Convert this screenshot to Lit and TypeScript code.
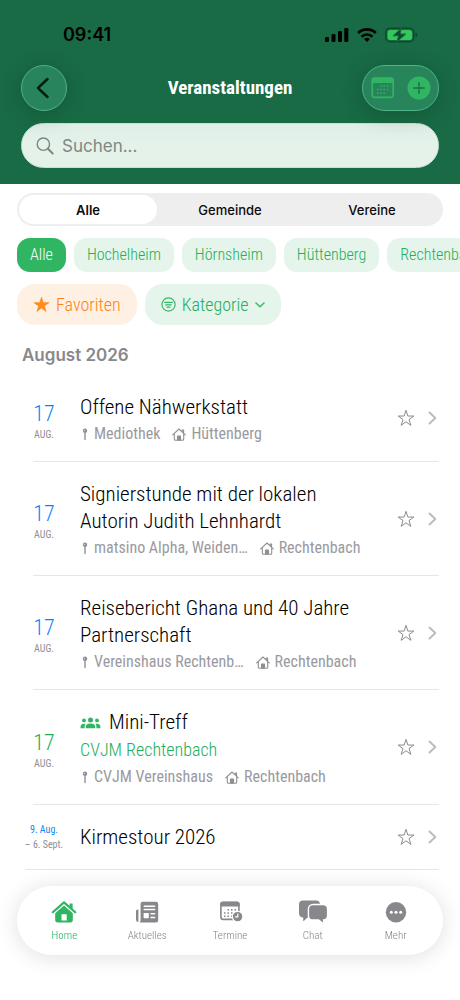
import { LitElement, html, css, svg, nothing } from "lit";
import { customElement, property, state } from "lit/decorators.js";
import { classMap } from "lit/directives/class-map.js";

const star = "M12 1.8l2.5 7.6h8l-6.5 4.7 2.5 7.7-6.5-4.8-6.5 4.8L8 14.1 1.500 9.400h8z";

const icons = {
  signal: svg`<svg width="24" height="16" viewBox="0 0 24 16" fill="#000" aria-hidden="true">
    <rect x="0" y="10" width="4" height="5" rx="1.200"/><rect x="6.500" y="7" width="4" height="8" rx="1.200"/>
    <rect x="13" y="4" width="4" height="11" rx="1.200"/><rect x="19.300" y="1" width="4" height="14" rx="1.200"/></svg>`,
  wifi: svg`<svg width="20" height="16" viewBox="0 0 20 16" fill="none" stroke="#000" stroke-width="2.700" aria-hidden="true">
    <path d="M1.200 6a12.500 12.500 0 0 1 17.600 0"/><path d="M4.600 9.700a7.700 7.700 0 0 1 10.800 0"/>
    <path d="M10 15l-2.900-2.900a4.200 4.200 0 0 1 5.800 0z" fill="#000" stroke="none"/></svg>`,
  battery: svg`<svg width="33" height="16" viewBox="0 0 33 16" aria-hidden="true">
    <rect x=".8" y="1.300" width="28" height="13.400" rx="4.300" fill="none" stroke="#0f4a2e" stroke-width="1.500"/>
    <path d="M30.500 5.500q2 .5 2 2.500t-2 2.500z" fill="#0f4a2e"/>
    <rect x="2.500" y="3" width="24.600" height="10" rx="2.800" fill="#34c759"/>
    <path d="M16.500 1L8 8.800h5.600L11.800 15 20.800 7H15z" fill="#0f4a2e" stroke="#186b45" stroke-width="1"/></svg>`,
  back: svg`<svg width="14" height="22" viewBox="0 0 14 22" fill="none" stroke="#04210f" stroke-width="2.500" stroke-linecap="round" stroke-linejoin="round" aria-hidden="true"><path d="M11.500 2L2 11l9.500 9"/></svg>`,
  calendar: svg`<svg width="24" height="22" viewBox="0 0 24 22" aria-hidden="true">
    <rect x="1.200" y="1.200" width="21" height="19.200" rx="2.600" fill="none" stroke="#30b562" stroke-width="1.700"/>
    <path d="M.8 6V3.200A2.600 2.600 0 0 1 3.400.6h16.600a2.600 2.600 0 0 1 2.600 2.600V6z" fill="#30b562"/>
    <g fill="none" stroke="#30b562" stroke-width="1.500" stroke-dasharray="1.500 1.700">
    <path d="M9.200 9h10M6 12.500h13M6 16h9"/></g></svg>`,
  plus: svg`<svg width="24" height="24" viewBox="0 0 24 24" aria-hidden="true"><circle cx="12" cy="12" r="11.500" fill="#30b562"/><path d="M12 7v10M7 12h10" stroke="#217c4e" stroke-width="1.800" stroke-linecap="round"/></svg>`,
  search: svg`<svg width="18" height="18" viewBox="0 0 19 19" fill="none" stroke="#7a8580" stroke-width="1.500" stroke-linecap="round" aria-hidden="true"><circle cx="7.800" cy="7.600" r="6.500"/><path d="M12.600 12.400l5 5" stroke-width="2"/></svg>`,
  starFill: svg`<svg width="17" height="17" viewBox="0 0 24 24" fill="#ff8c22" stroke="#ff8c22" stroke-width="1" stroke-linejoin="round" aria-hidden="true"><path d=${star}/></svg>`,
  star: svg`<svg width="18" height="18" viewBox="0 0 24 24" fill="none" stroke="#88888c" stroke-width="1.300" stroke-linejoin="round" aria-hidden="true"><path d=${star}/></svg>`,
  filter: svg`<svg width="15" height="15" viewBox="0 0 15 15" fill="none" stroke="#38b869" stroke-width="1.200" stroke-linecap="round" aria-hidden="true"><circle cx="7.500" cy="7.500" r="6.600"/><path d="M3.700 5.400h7.600M4.700 7.800h5.600M6 10.200h3"/></svg>`,
  down: svg`<svg width="10" height="6" viewBox="0 0 10 6" fill="none" stroke="#38b869" stroke-width="1.500" stroke-linecap="round" stroke-linejoin="round" aria-hidden="true"><path d="M1 1l4 3.800L9 1"/></svg>`,
  right: svg`<svg width="9" height="14" viewBox="0 0 9 14" fill="none" stroke="#bcbcc0" stroke-width="2" stroke-linecap="round" stroke-linejoin="round" aria-hidden="true"><path d="M1.500 1.500L7.300 7l-5.800 5.500"/></svg>`,
  pin: svg`<svg width="6" height="13" viewBox="0 0 6 13" aria-hidden="true"><circle cx="3" cy="2.800" r="2.200" fill="#909094"/><path d="M3 5v6.500" stroke="#909094" stroke-width="1.400" stroke-linecap="round"/><circle cx="2.400" cy="2.200" r=".5" fill="#fff"/></svg>`,
  house: svg`<svg width="14" height="13" viewBox="0 0 14 13" fill="none" stroke="#909094" stroke-width="1.100" stroke-linecap="round" stroke-linejoin="round" aria-hidden="true"><path d="M.7 6.800L7 1l6.300 5.800M2.300 5.800v5.200q0 1.300 1.300 1.300h6.800q1.300 0 1.300-1.300V5.800M11.600 5V2h-1.300v1.800"/><path d="M5.500 12V8h3v4z" fill="#909094"/></svg>`,
  group: svg`<svg width="21" height="12" viewBox="0 0 21 12" fill="#30b562" aria-hidden="true"><circle cx="10.500" cy="2.900" r="2.500"/><circle cx="4" cy="3.400" r="1.900"/><circle cx="17" cy="3.400" r="1.900"/><path d="M5.800 11.300V9.600c0-2 2-3.100 4.700-3.100s4.700 1.100 4.700 3.100v1.700zM.6 11.300V9.600C.6 7.800 2 6.700 4 6.700c.6 0 1.100.1 1.600.3-.7.700-1 1.600-1 2.600v1.700zM20.400 11.300V9.600c0-1.800-1.400-2.900-3.400-2.900-.6 0-1.100.1-1.600.3.700.7 1 1.600 1 2.600v1.700z"/></svg>`,
  home: svg`<svg width="26" height="24" viewBox="0 0 26 24" aria-hidden="true"><path d="M1.800 12.300L13 2.400l11.200 9.900" fill="none" stroke="#30b562" stroke-width="2.200" stroke-linecap="round" stroke-linejoin="round"/><path d="M18.600 3.500h3V9l-3-2.600z" fill="#30b562"/><path fill-rule="evenodd" d="M13 5.600l8.800 7.700v6.900a2.400 2.400 0 0 1-2.400 2.400H6.600a2.400 2.400 0 0 1-2.400-2.400v-6.900zM10.500 14.200v6.300h5.200v-6.300z" fill="#30b562"/></svg>`,
  news: svg`<svg width="24" height="24" viewBox="0 0 24 24" aria-hidden="true"><path fill="#88888c" d="M3.400 9.500v12.600Q1 22 1 19.700V11q0-1.500 1.500-1.500z"/><path fill="#88888c" d="M8 1.800h13a2.200 2.200 0 0 1 2.200 2.200v16.200a2.200 2.200 0 0 1-2.200 2.200H4.600q1-.8 1-2.200V4A2.200 2.200 0 0 1 8 1.800z"/><path stroke="#fff" stroke-width="1.500" stroke-linecap="round" d="M9.200 6.300h10.400M9.200 9.600h10.400M16 13.800h3.600M16 17.600h3.600"/><rect x="8.600" y="12.900" width="5.200" height="5.300" rx=".7" fill="#fff"/></svg>`,
  dates: svg`<svg width="26" height="24" viewBox="0 0 26 24" aria-hidden="true"><rect x="3.900" y="2.600" width="18" height="16.800" rx="2.400" fill="none" stroke="#88888c" stroke-width="1.600"/><path d="M3.100 6.500V4.200a2.600 2.600 0 0 1 2.600-2.600h14.400a2.600 2.600 0 0 1 2.600 2.600v2.300z" fill="#88888c"/><path d="M10.500 9.700h9M7 13h11M7 16.300h8" stroke="#88888c" stroke-width="1.500" stroke-dasharray="1.500 2"/><circle cx="20.600" cy="16.600" r="5.300" fill="#88888c" stroke="#fff" stroke-width="1.200"/><path d="M20.800 13.500v3.400h-2.900" fill="none" stroke="#fff" stroke-width="1.200"/></svg>`,
  chat: svg`<svg width="30" height="24" viewBox="0 0 30 24" fill="#88888c" aria-hidden="true"><path d="M5 .6h13a4 4 0 0 1 4 4v8.900a4 4 0 0 1-4 4H9.500L5.800 21q-.6.300-.6-.4v-3.100A4 4 0 0 1 1 13.500V4.600a4 4 0 0 1 4-4z"/><path d="M15 4.500h10a4.600 4.600 0 0 1 4.600 4.600v6.300c0 2.500-1.700 4.300-4 4.500v2.600q-.2 1.200-1.200.5L20.600 20H15a4.600 4.600 0 0 1-4.600-4.600V9.100A4.600 4.600 0 0 1 15 4.500z" stroke="#fff" stroke-width="1.400"/></svg>`,
  more: svg`<svg width="24" height="24" viewBox="0 0 24 24" aria-hidden="true"><circle cx="12" cy="12.200" r="10.200" fill="#88888c"/><g fill="#fff"><circle cx="7.300" cy="12.200" r="1.500"/><circle cx="12" cy="12.200" r="1.500"/><circle cx="16.700" cy="12.200" r="1.500"/></g></svg>`,
};

interface Entry {
  day?: string; month?: string; from?: string; until?: string;
  title: string; club?: string; place?: string; town?: string;
}

const entries: Entry[] = [
  { day: "17", month: "AUG.", title: "Offene Nähwerkstatt", place: "Mediothek", town: "Hüttenberg" },
  { day: "17", month: "AUG.", title: "Signierstunde mit der lokalen Autorin Judith Lehnhardt", place: "matsino Alpha, Weiden…", town: "Rechtenbach" },
  { day: "17", month: "AUG.", title: "Reisebericht Ghana und 40 Jahre Partnerschaft", place: "Vereinshaus Rechtenb…", town: "Rechtenbach" },
  { day: "17", month: "AUG.", title: "Mini-Treff", club: "CVJM Rechtenbach", place: "CVJM Vereinshaus", town: "Rechtenbach" },
  { from: "9. Aug.", until: "– 6. Sept.", title: "Kirmestour 2026" },
];

const reset = css`
  * { box-sizing: border-box; }
  button, input, select { font: inherit; color: inherit; margin: 0; padding: 0; border: 0; background: none; }
  button { cursor: pointer; }
  a { color: inherit; text-decoration: none; }
  svg { display: block; flex: none; }
`;

@customElement("event-row")
class EventRow extends LitElement {
  @property({ attribute: false }) entry!: Entry;

  static styles = [reset, css`
    :host { display: block; }
    .row { display: flex; align-items: center; border-bottom: 1px solid #e6e6e8; margin-left: 33px; margin-right: 21px; padding-right: 2px; }
    .row.span { margin-left: 25px; }
    .link { display: flex; flex: 1; min-width: 0; align-items: center; gap: 25px; padding: 19px 0 14px; }
    .span .link { gap: 17px; padding: 17px 0; }
    .date { flex: none; width: 22px; display: flex; flex-direction: column; align-items: center; white-space: nowrap; color: #8e8e93; font-size: 10px; line-height: 15px; font-weight: 400; }
    .span .date { width: 38px; }
    .day { font-size: 22px; line-height: 27px; font-weight: 300; color: #0a84ff; }
    .club-event .day { color: #22ae59; }
    .from { color: #1588f5; }
    .body { flex: 1; min-width: 0; padding-right: 14px; }
    .title { margin: 0; font-size: 21px; line-height: 27px; font-weight: 300; color: #000; display: flex; align-items: center; gap: 8px; }
    .club { font-size: 18px; line-height: 28px; color: #22ae59; }
    .meta { display: flex; gap: 12px; font-size: 16px; line-height: 26px; font-weight: 400; color: #9a9a9e; white-space: nowrap; }
    .item { display: flex; align-items: center; gap: 5px; }
    .item:first-child { padding-left: 2px; gap: 6px; }
    .fav { width: 44px; height: 44px; display: grid; place-items: center; }
  `];

  render() {
    const e = this.entry;
    return html`<article class=${classMap({ row: true, span: !!e.from, "club-event": !!e.club })}>
      <a class="link" href="#">
        <div class="date">${e.from
          ? html`<span class="from">${e.from}</span><span>${e.until}</span>`
          : html`<span class="day">${e.day}</span><span>${e.month}</span>`}</div>
        <div class="body">
          <h3 class="title">${e.club ? icons.group : nothing}<span>${e.title}</span></h3>
          ${e.club ? html`<div class="club">${e.club}</div>` : nothing}
          ${e.place ? html`<div class="meta">
            <span class="item">${icons.pin}<span>${e.place}</span></span>
            <span class="item">${icons.house}<span>${e.town}</span></span></div>` : nothing}
        </div>
      </a>
      <button class="fav" aria-label="Favorit">${icons.star}</button>
      ${icons.right}
    </article>`;
  }
}

@customElement("app-root")
class AppRoot extends LitElement {
  @state() private segment = "Alle";
  @state() private town = "Alle";

  static styles = [reset, css`
    :host { display: block; min-height: 100vh; background: #fff; color: #1a1a1c; font-family: "Roboto Condensed", "Liberation Sans Narrow", "Liberation Sans", sans-serif; font-weight: 300; }
    .header { background: #186b45; padding: 23px 21px 16px; }
    .status { display: flex; align-items: center; justify-content: space-between; padding: 0 21px 0 42px; font: 600 18px/24px Inter, sans-serif; color: #000; }
    .indicators { display: flex; gap: 8px; }
    .nav { display: grid; grid-template-columns: 1fr auto 1fr; align-items: center; margin-top: 18px; }
    .glass { height: 46px; border-radius: 23px; background: #28845a; border: 1px solid #4fb487; box-shadow: 0 4px 22px rgba(0, 30, 15, .24); }
    .back { width: 46px; display: grid; place-items: center; padding-right: 2px; }
    .page { margin: 0; font-size: 19px; line-height: 24px; font-weight: 700; color: #fff; }
    .actions { justify-self: end; display: flex; align-items: center; gap: 12px; padding: 0 7px 0 8px; }
    .search { display: flex; align-items: center; gap: 8px; height: 45px; margin-top: 12px; padding: 0 14px; border-radius: 23px; background: linear-gradient(#dfeee6, #e4f2ea 50%); border: 1px solid #c5e3d3; }
    .field { flex: 1; min-width: 0; outline: 0; font: 400 17px/24px Inter, sans-serif; color: #333; appearance: none; }
    .field::placeholder { color: #7d8883; opacity: 1; }
    .segments { display: flex; gap: 4px; margin: 9px 17px 0; padding: 2px; height: 33px; border-radius: 17px; background: #eee; }
    .segment { flex: 1; border-radius: 15px; font: 500 13px/18px Inter, sans-serif; color: #0c0c0c; }
    .segment.on { background: #fff; font-weight: 600; }
    .chips { display: flex; gap: 8px; margin-top: 12px; padding: 0 17px; overflow: hidden; }
    .chip { flex: none; height: 34px; padding: 0 13px; border-radius: 13px; background: #e5f5eb; color: #22ae59; font-size: 16px; line-height: 24px; }
    .chip.on { background: #30b562; color: #fff; }
    .filters { display: flex; gap: 8px; margin: 12px 17px 0; }
    .filter { display: flex; align-items: center; gap: 6px; height: 41px; padding: 0 16px; border-radius: 18px; font-size: 18px; line-height: 26px; }
    .favorites { background: #fff0e4; color: #ff8214; }
    .category { background: #e5f5eb; color: #22ae59; }
    .choice { appearance: none; outline: 0; cursor: pointer; }
    .month { margin: 17px 22px 7px; font: 600 17px/26px Inter, sans-serif; color: #88888c; }
    .list { list-style: none; margin: 0; padding: 0 0 130px; }
    .tabs { position: fixed; left: 17px; right: 17px; bottom: 45px; display: flex; padding: 14px 6px 12px; border-radius: 35px; background: #fff; box-shadow: 0 2px 22px rgba(0, 0, 0, .13); }
    .tab { flex: 1; display: flex; flex-direction: column; align-items: center; gap: 4px; font-size: 11px; line-height: 15px; color: #848488; }
    .tab.on { color: #22ae59; }
  `];

  render() {
    const tabs: [string, unknown][] = [["Home", icons.home], ["Aktuelles", icons.news], ["Termine", icons.dates], ["Chat", icons.chat], ["Mehr", icons.more]];
    return html`
      <header class="header">
        <div class="status"><time>09:41</time><div class="indicators">${icons.signal}${icons.wifi}${icons.battery}</div></div>
        <div class="nav">
          <button class="glass back" aria-label="Zurück">${icons.back}</button>
          <h1 class="page">Veranstaltungen</h1>
          <div class="glass actions">
            <button aria-label="Kalender">${icons.calendar}</button>
            <button aria-label="Hinzufügen">${icons.plus}</button>
          </div>
        </div>
        <label class="search">${icons.search}<input class="field" type="search" placeholder="Suchen..." aria-label="Suchen"></label>
      </header>
      <main>
        <div class="segments">${["Alle", "Gemeinde", "Vereine"].map((s) => html`
          <button class=${classMap({ segment: true, on: s === this.segment })} @click=${() => (this.segment = s)}>${s}</button>`)}</div>
        <div class="chips">${["Alle", "Hochelheim", "Hörnsheim", "Hüttenberg", "Rechtenbach"].map((t) => html`
          <button class=${classMap({ chip: true, on: t === this.town })} @click=${() => (this.town = t)}>${t}</button>`)}</div>
        <div class="filters">
          <button class="filter favorites">${icons.starFill}Favoriten</button>
          <label class="filter category">${icons.filter}<select class="choice" aria-label="Kategorie"><option>Kategorie</option></select>${icons.down}</label>
        </div>
        <h2 class="month">August 2026</h2>
        <ul class="list">${entries.map((e) => html`<li><event-row .entry=${e}></event-row></li>`)}</ul>
      </main>
      <nav class="tabs">${tabs.map(([name, icon], i) => html`
        <a href="#" class=${classMap({ tab: true, on: i === 0 })}>${icon}<span>${name}</span></a>`)}</nav>`;
  }
}
